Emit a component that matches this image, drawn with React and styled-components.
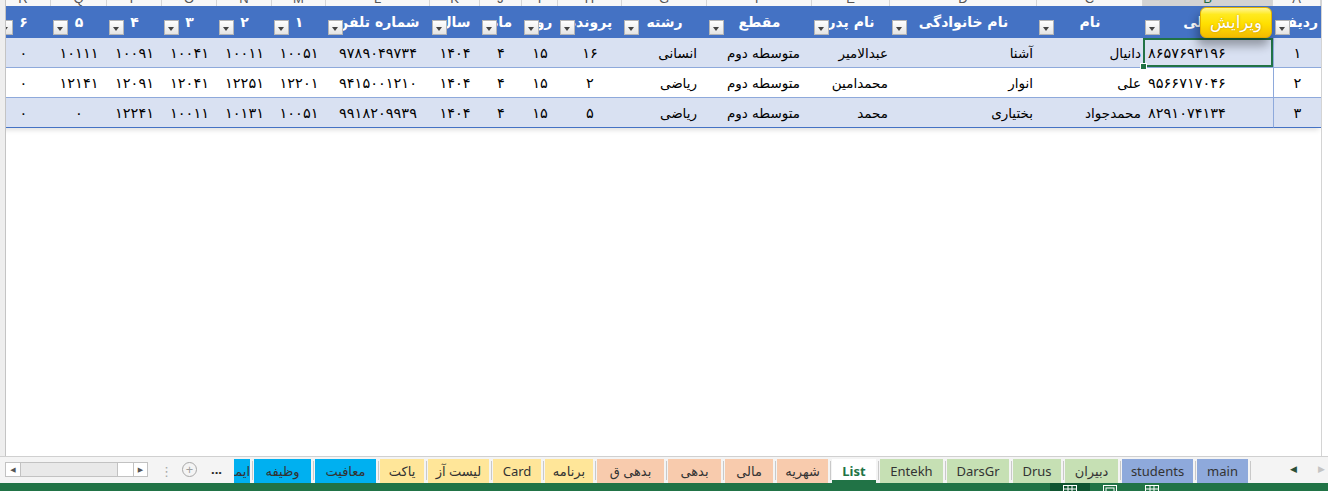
import React from "react";
import styled, { createGlobalStyle } from "styled-components";

const GlobalStyle = createGlobalStyle`
  html, body { margin: 0; padding: 0; background: #fff; }
  body { font-family: "DejaVu Sans", "Liberation Sans", sans-serif; }
  #root { width: 1328px; height: 491px; overflow: hidden; }
`;

const COLS = [
  { title: "۶", w: 55, letter: "R", num: true },
  { title: "۵", w: 56, letter: "Q", num: true },
  { title: "۴", w: 55, letter: "P", num: true },
  { title: "۳", w: 55, letter: "O", num: true },
  { title: "۲", w: 55, letter: "N", num: true },
  { title: "۱", w: 54, letter: "M", num: true },
  { title: "شماره تلفن", w: 104, letter: "L", num: true },
  { title: "سال", w: 50, letter: "K", num: true },
  { title: "ماه", w: 42, letter: "J", num: true },
  { title: "روز", w: 36, letter: "I", num: true },
  { title: "پرونده", w: 64, letter: "H", num: true },
  { title: "رشته", w: 85, letter: "G", align: "right", pad: 10 },
  { title: "مقطع", w: 105, letter: "F", align: "right", pad: 12 },
  { title: "نام پدر", w: 78, letter: "E", align: "right", pad: 2 },
  { title: "نام خانوادگی", w: 147, letter: "D", align: "right", pad: 4 },
  { title: "نام", w: 106, letter: "C", align: "right", pad: 2 },
  { title: "کد ملی", w: 130, letter: "B", align: "left", pad: 5, num: true },
  { title: "ردیف", w: 48, letter: "A", headAlign: "right", headPad: 3, num: true },
];

const TEMPLATE = COLS.map((c) => c.w + "px").join(" ");

const ROWS = [
  ["۰", "۱۰۱۱۱", "۱۰۰۹۱", "۱۰۰۴۱", "۱۰۰۱۱", "۱۰۰۵۱", "۹۷۸۹۰۴۹۷۳۴", "۱۴۰۴", "۴", "۱۵", "۱۶", "انسانی", "متوسطه دوم", "عبدالامیر", "آشنا", "دانیال", "۸۶۵۷۶۹۳۱۹۶", "۱"],
  ["۰", "۱۲۱۴۱", "۱۲۰۹۱", "۱۲۰۴۱", "۱۲۲۵۱", "۱۲۲۰۱", "۹۴۱۵۰۰۱۲۱۰", "۱۴۰۴", "۴", "۱۵", "۲", "ریاضی", "متوسطه دوم", "محمدامین", "انوار", "علی", "۹۵۶۶۷۱۷۰۴۶", "۲"],
  ["۰", "۰", "۱۲۲۴۱", "۱۰۰۱۱", "۱۰۱۳۱", "۱۰۰۵۱", "۹۹۱۸۲۰۹۹۳۹", "۱۴۰۴", "۴", "۱۵", "۵", "ریاضی", "متوسطه دوم", "محمد", "بختیاری", "محمدجواد", "۸۲۹۱۰۷۴۱۳۴", "۳"],
];

const TABS = [
  { name: "ایمنی", w: 16, bg: "#00B0F0", clip: true },
  { name: "وظیفه", w: 57, bg: "#00B0F0" },
  { name: "معافیت", w: 61, bg: "#00B0F0" },
  { name: "یاکت", w: 44, bg: "#FFE699" },
  { name: "لیست آز", w: 61, bg: "#FFE699" },
  { name: "Card", w: 48, bg: "#FFE699" },
  { name: "برنامه", w: 48, bg: "#FFE699" },
  { name: "بدهی ق", w: 67, bg: "#F8CBAD" },
  { name: "بدهی", w: 53, bg: "#F8CBAD" },
  { name: "مالی", w: 48, bg: "#F8CBAD" },
  { name: "شهریه", w: 51, bg: "#F8CBAD" },
  { name: "List", w: 44, bg: "#fff", active: true },
  { name: "Entekh", w: 63, bg: "#C6E0B4" },
  { name: "DarsGr", w: 62, bg: "#C6E0B4" },
  { name: "Drus", w: 48, bg: "#C6E0B4" },
  { name: "دبیران", w: 53, bg: "#C6E0B4" },
  { name: "students", w: 71, bg: "#8EA9DB" },
  { name: "main", w: 51, bg: "#8EA9DB" },
];

const justify = (a) => (a === "right" ? "flex-end" : a === "left" ? "flex-start" : "center");

const Window = styled.div`
  width: 1328px;
  height: 491px;
  display: flex;
  flex-direction: column;
  background: #fff;
`;

const Sheet = styled.div`
  height: 456px;
  display: flex;
`;

const VScroll = styled.div`
  width: 6px;
  box-sizing: border-box;
  background: #eeeeee;
  border-right: 1px solid #c4c4c4;
`;

const GridArea = styled.div`
  width: 1315px;
  position: relative;
  overflow: hidden;
`;

const GridInner = styled.div`
  margin-left: -10px;
  width: 1325px;
`;

const LetterRow = styled.div`
  display: grid;
  grid-template-columns: ${TEMPLATE};
  height: 6px;
  overflow: hidden;
  background: #f7f7f7;
`;

const LetterCell = styled.div`
  box-sizing: border-box;
  border-right: 1px solid #d6d6d6;
  background: ${(p) => (p.$active ? "#d3d3d3" : "transparent")};
  border-bottom: ${(p) => (p.$active ? "2px solid #217346" : "none")};
  text-align: center;
  font: 13px "Liberation Sans", sans-serif;
  color: ${(p) => (p.$active ? "#1e6b40" : "#555")};
  span {
    display: block;
    line-height: 14px;
    transform: translateY(-8px);
  }
`;

const Table = styled.div`
  box-shadow: 0 4px 5px -2px rgba(0, 0, 0, 0.13);
`;

const Row = styled.div`
  display: grid;
  grid-template-columns: ${TEMPLATE};
`;

const HeadCell = styled.div`
  height: 32px;
  box-sizing: border-box;
  position: relative;
  display: flex;
  align-items: center;
  justify-content: ${(p) => justify(p.$align)};
  padding-right: ${(p) => p.$pad || 0}px;
  background: #4472c4;
  color: #fff;
  font-weight: bold;
  font-size: 14px;
  white-space: nowrap;
  overflow: hidden;
`;

const DropDown = styled.div`
  position: absolute;
  left: 2px;
  top: 14px;
  width: 15px;
  height: 15px;
  box-sizing: border-box;
  border: 1px solid #b5b5b5;
  background: linear-gradient(#ffffff, #e4e4e4);
  &::after {
    content: "";
    position: absolute;
    left: 3px;
    top: 6px;
    border-left: 3.5px solid transparent;
    border-right: 3.5px solid transparent;
    border-top: 4px solid #444;
  }
`;

const DataCell = styled.div`
  height: 30px;
  box-sizing: border-box;
  position: relative;
  display: flex;
  align-items: center;
  justify-content: ${(p) => justify(p.$align)};
  padding-left: ${(p) => (p.$align === "left" ? p.$pad : 0)}px;
  padding-right: ${(p) => (p.$align === "right" ? p.$pad : 0)}px;
  background: ${(p) => (p.$stripe ? "#d9e1f2" : "#fff")};
  border-bottom: 1px solid ${(p) => (p.$last ? "#4472c4" : "#8ea9db")};
  border-left: ${(p) => (p.$edge ? "1px solid #8ea9db" : "none")};
  font-size: ${(p) => (p.$num ? 14.5 : 13.5)}px;
  letter-spacing: ${(p) => (p.$num ? "0.6px" : "0")};
  color: #000;
  white-space: nowrap;
  overflow: ${(p) => (p.$selected ? "visible" : "hidden")};
  z-index: ${(p) => (p.$selected ? 2 : 0)};
  box-shadow: ${(p) => (p.$selected ? "inset 0 0 0 2px #217346" : "none")};
`;

const FillHandle = styled.div`
  position: absolute;
  left: -3px;
  bottom: -3px;
  width: 5px;
  height: 5px;
  background: #217346;
  border: 1px solid #fff;
`;

const Txt = styled.span`
  direction: rtl;
  unicode-bidi: isolate;
`;

const EditButton = styled.div`
  position: absolute;
  left: 1194px;
  top: 7px;
  width: 72px;
  height: 31px;
  box-sizing: border-box;
  border-radius: 6px;
  border: 1px solid #e2b000;
  background: linear-gradient(180deg, #fff59a 0%, #ffea20 22%, #ffdf00 55%, #f3bc00 100%);
  box-shadow: -3px 8px 10px rgba(0, 0, 0, 0.32);
  display: flex;
  align-items: center;
  justify-content: center;
  color: #fff;
  font-size: 16.5px;
  text-shadow: 0 0 2px rgba(170, 120, 0, 0.75);
  z-index: 3;
`;

const RightStrip = styled.div`
  flex: 1;
  border-left: 1px solid #d4d4d4;
  background: #fff;
`;

const TabBar = styled.div`
  height: 27px;
  box-sizing: border-box;
  border-top: 1px solid #d0d0d0;
  background: #f4f4f4;
  display: flex;
  align-items: flex-start;
  padding-left: 5px;
  font-family: "Noto Sans", "DejaVu Sans", sans-serif;
`;

const HScroll = styled.div`
  width: 143px;
  height: 15px;
  margin-top: 5px;
  box-sizing: border-box;
  border: 1px solid #c2c2c2;
  background: #e9e9e9;
  display: flex;
`;

const ScrollBtn = styled.div`
  width: ${(p) => p.$w}px;
  height: 100%;
  box-sizing: border-box;
  background: #fff;
  border-left: ${(p) => (p.$bl ? "1px solid #c2c2c2" : "none")};
  border-right: ${(p) => (p.$br ? "1px solid #c2c2c2" : "none")};
  margin-left: ${(p) => p.$ml || 0}px;
  display: flex;
  align-items: center;
  justify-content: center;
  font-size: 7px;
  color: #555;
`;

const Dots = styled.div`
  margin: 5px 0 0 12px;
  width: 7px;
  font-size: 13px;
  color: #a8a8a8;
  text-align: center;
`;

const AddSheet = styled.div`
  margin: 5px 0 0 15px;
  width: 15px;
  height: 15px;
  box-sizing: border-box;
  border: 1px solid #a8a8a8;
  border-radius: 50%;
  color: #a0a0a0;
  font-size: 13px;
  line-height: 12px;
  text-align: center;
`;

const More = styled.div`
  margin: 3px 0 0 14px;
  width: 17px;
  font-size: 13px;
  color: #222;
  font-weight: bold;
`;

const Tabs = styled.div`
  display: flex;
  margin-left: 6px;
  height: 100%;
`;

const TabSlot = styled.div`
  display: flex;
  align-items: flex-end;
  padding-right: 4px;
  position: relative;
  &::after {
    content: "";
    position: absolute;
    right: 1px;
    top: 4px;
    bottom: 3px;
    width: 1px;
    background: #c9c9c9;
  }
`;

const Tab = styled.div`
  width: ${(p) => p.$w}px;
  height: 24px;
  box-sizing: border-box;
  background: ${(p) => p.$bg};
  display: flex;
  align-items: center;
  justify-content: ${(p) => (p.$clip ? "flex-end" : "center")};
  overflow: hidden;
  white-space: nowrap;
  font-size: 13px;
  color: ${(p) => (p.$active ? "#217346" : "#333")};
  font-weight: ${(p) => (p.$active ? "bold" : "normal")};
  border-bottom: ${(p) => (p.$active ? "3px solid #217346" : "none")};
  padding-top: ${(p) => (p.$active ? "2px" : "0")};
`;

const NavArrows = styled.div`
  display: flex;
  margin: 5px 0 0 38px;
  gap: 20px;
`;

const Arrow = styled.div`
  width: 8px;
  font-size: 9px;
  color: ${(p) => (p.$dim ? "#c4c4c4" : "#2b4f36")};
`;

const StatusBar = styled.div`
  flex: 1;
  background: #217346;
  display: flex;
  align-items: flex-start;
  padding-left: 1050px;
  overflow: hidden;
`;

const ViewBtn = styled.div`
  width: ${(p) => p.$w}px;
  height: 8px;
  margin-left: ${(p) => p.$ml}px;
  background: ${(p) => (p.$on ? "#0f5530" : "transparent")};
  display: flex;
  justify-content: center;
  padding-top: 2px;
  box-sizing: border-box;
`;

function GridIcon() {
  return (
    <svg width="14" height="10" viewBox="0 0 14 10">
      <rect x="0.5" y="0.5" width="13" height="12" fill="none" stroke="#fff" />
      <line x1="0.5" y1="4" x2="13.5" y2="4" stroke="#fff" />
      <line x1="5" y1="0.5" x2="5" y2="10" stroke="#fff" />
      <line x1="9" y1="0.5" x2="9" y2="10" stroke="#fff" />
    </svg>
  );
}

function PageIcon() {
  return (
    <svg width="14" height="10" viewBox="0 0 14 10">
      <rect x="0.5" y="0.5" width="13" height="12" fill="none" stroke="#fff" />
      <rect x="3" y="3" width="8" height="8" fill="none" stroke="#fff" />
    </svg>
  );
}

export default function App() {
  return (
    <>
      <GlobalStyle />
      <Window>
        <Sheet>
          <VScroll />
          <GridArea>
            <GridInner>
              <LetterRow>
                {COLS.map((c) => (
                  <LetterCell key={c.letter} $active={c.letter === "B"}>
                    <span>{c.letter}</span>
                  </LetterCell>
                ))}
              </LetterRow>
              <Table>
                <Row>
                  {COLS.map((c) => (
                    <HeadCell key={c.letter} $align={c.headAlign} $pad={c.headPad}>
                      <Txt>{c.title}</Txt>
                      <DropDown />
                    </HeadCell>
                  ))}
                </Row>
                {ROWS.map((row, r) => (
                  <Row key={r}>
                    {row.map((v, i) => {
                      const c = COLS[i];
                      const selected = r === 0 && c.letter === "B";
                      return (
                        <DataCell
                          key={i}
                          $align={c.align}
                          $pad={c.pad}
                          $num={c.num}
                          $stripe={r % 2 === 0}
                          $last={r === ROWS.length - 1}
                          $edge={c.letter === "A"}
                          $selected={selected}
                        >
                          <Txt>{v}</Txt>
                          {selected && <FillHandle />}
                        </DataCell>
                      );
                    })}
                  </Row>
                ))}
              </Table>
            </GridInner>
            <EditButton>
              <Txt>ویرایش</Txt>
            </EditButton>
          </GridArea>
          <RightStrip />
        </Sheet>
        <TabBar>
          <HScroll>
            <ScrollBtn $w={15} $br>◀</ScrollBtn>
            <ScrollBtn $w={17} $ml={96} $bl $br />
            <ScrollBtn $w={13}>▶</ScrollBtn>
          </HScroll>
          <Dots>⋮</Dots>
          <AddSheet>+</AddSheet>
          <More>...</More>
          <Tabs>
            {TABS.map((t) => (
              <TabSlot key={t.name}>
                <Tab $w={t.w} $bg={t.bg} $active={t.active} $clip={t.clip}>
                  <Txt>{t.name}</Txt>
                </Tab>
              </TabSlot>
            ))}
          </Tabs>
          <NavArrows>
            <Arrow>◀</Arrow>
            <Arrow $dim>▶</Arrow>
          </NavArrows>
        </TabBar>
        <StatusBar>
          <ViewBtn $w={40} $ml={0} $on>
            <GridIcon />
          </ViewBtn>
          <ViewBtn $w={16} $ml={12}>
            <PageIcon />
          </ViewBtn>
          <ViewBtn $w={16} $ml={26}>
            <GridIcon />
          </ViewBtn>
        </StatusBar>
      </Window>
    </>
  );
}
